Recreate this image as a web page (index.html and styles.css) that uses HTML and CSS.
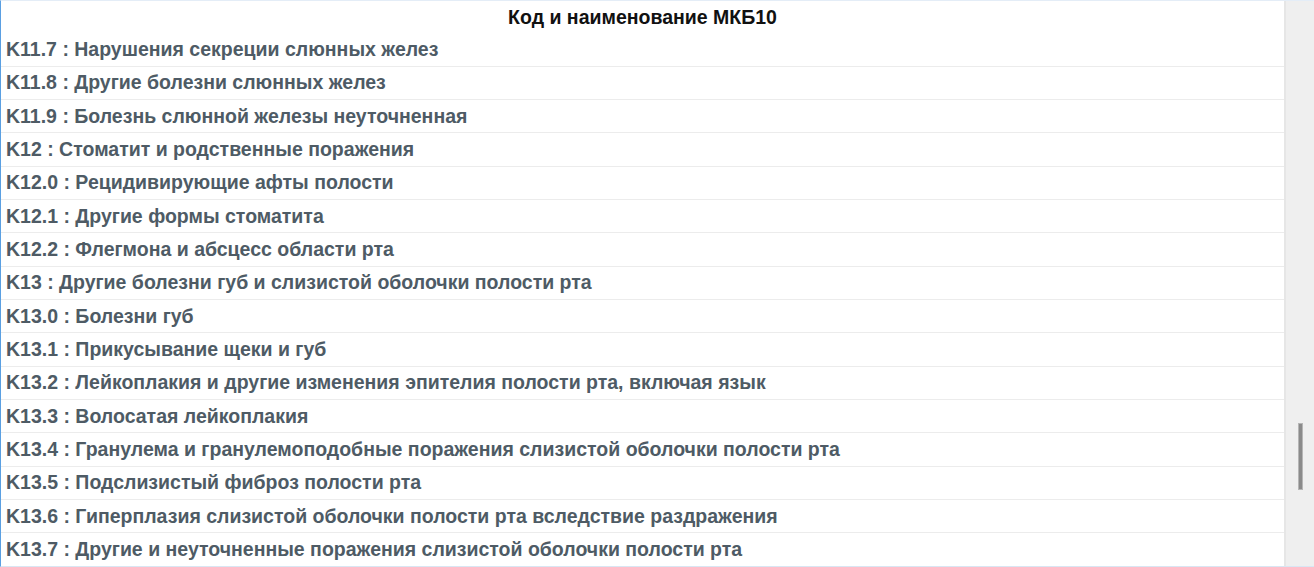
FILE: index.html
```html
<!DOCTYPE html>
<html lang="ru">
<head>
<meta charset="utf-8">
<link rel="stylesheet" href="styles.css">
</head>
<body>
<div class="frame">
  <div class="table">
    <div class="head">Код и наименование МКБ10</div>
    <div class="row">K11.7 : Нарушения секреции слюнных желез</div>
    <div class="row">K11.8 : Другие болезни слюнных желез</div>
    <div class="row">K11.9 : Болезнь слюнной железы неуточненная</div>
    <div class="row">K12 : Стоматит и родственные поражения</div>
    <div class="row">K12.0 : Рецидивирующие афты полости</div>
    <div class="row">K12.1 : Другие формы стоматита</div>
    <div class="row">K12.2 : Флегмона и абсцесс области рта</div>
    <div class="row">K13 : Другие болезни губ и слизистой оболочки полости рта</div>
    <div class="row">K13.0 : Болезни губ</div>
    <div class="row">K13.1 : Прикусывание щеки и губ</div>
    <div class="row">K13.2 : Лейкоплакия и другие изменения эпителия полости рта, включая язык</div>
    <div class="row">K13.3 : Волосатая лейкоплакия</div>
    <div class="row">K13.4 : Гранулема и гранулемоподобные поражения слизистой оболочки полости рта</div>
    <div class="row">K13.5 : Подслизистый фиброз полости рта</div>
    <div class="row">K13.6 : Гиперплазия слизистой оболочки полости рта вследствие раздражения</div>
    <div class="row">K13.7 : Другие и неуточненные поражения слизистой оболочки полости рта</div>
  </div>
  <div class="scroll">
    <div class="thumb"></div>
  </div>
</div>
</body>
</html>
```

FILE: styles.css
```css
html, body {
  margin: 0;
  padding: 0;
  background: #ffffff;
}
.frame {
  display: flex;
  height: 567px;
  box-sizing: border-box;
  border-top: 1px solid #e4edf7;
  border-bottom: 1px solid #d9e6f3;
  border-left: 1px solid #5a9fe2;
  overflow: hidden;
  font-family: "Liberation Sans", Arial, sans-serif;
  font-weight: bold;
}
.table {
  width: 1283px;
  border-right: 2px solid #e6e6e6;
  display: flex;
  flex-direction: column;
  overflow: hidden;
}
.head {
  flex: 0 0 32.333px;
  display: flex;
  align-items: center;
  justify-content: center;
  font-size: 19.5px;
  color: #111111;
}
.row {
  flex: 0 0 33.333px;
  box-sizing: border-box;
  border-bottom: 1px solid #ececec;
  display: flex;
  align-items: center;
  padding-left: 5px;
  font-size: 19.5px;
  color: #4e5b65;
  white-space: nowrap;
}
.scroll {
  flex: 1;
  background: #efefef;
  display: flex;
  justify-content: center;
  padding-top: 422px;
  box-sizing: border-box;
}
.thumb {
  width: 3px;
  height: 65px;
  background: #8a8a8a;
  border: 1px solid #b5b5b5;
  margin-left: 1px;
}
```
